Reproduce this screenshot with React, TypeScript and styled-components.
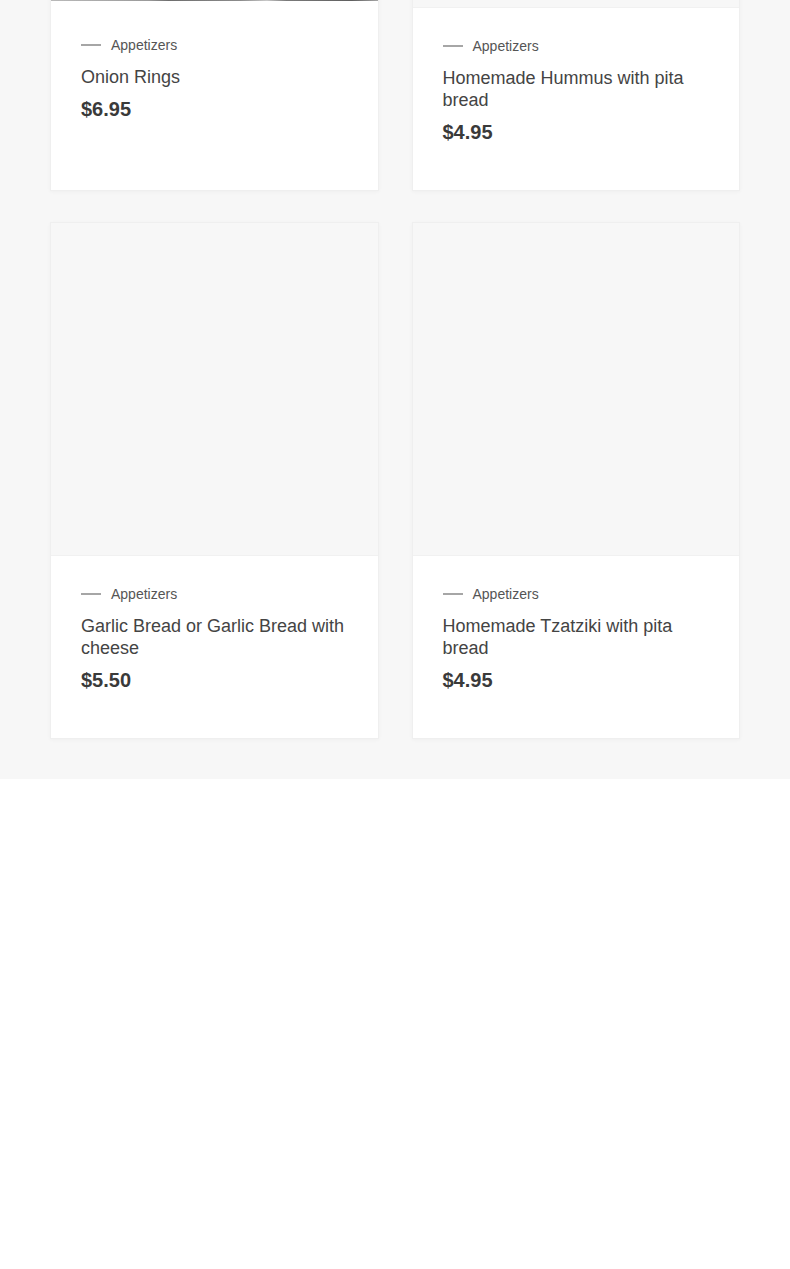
import React from "react";
import styled, { createGlobalStyle } from "styled-components";

const GlobalStyle = createGlobalStyle`
  html, body {
    margin: 0;
    padding: 0;
    background: #ffffff;
  }
  body {
    font-family: "Liberation Sans", Arial, sans-serif;
    -webkit-font-smoothing: antialiased;
  }
`;

const Section = styled.section`
  background: #f7f7f7;
  padding: 0 50px 40px;
  overflow: hidden;
`;

const Grid = styled.div<{ $offset?: number }>`
  display: grid;
  grid-template-columns: 1fr 1fr;
  column-gap: 33px;
  row-gap: 31px;
  margin-top: ${(p) => p.$offset ?? 0}px;
`;

const Card = styled.article`
  display: flex;
  flex-direction: column;
  background: #ffffff;
  border: 1px solid #efefef;
  box-shadow: 0 1px 4px rgba(0, 0, 0, 0.035);
`;

const Media = styled.div<{ $photo?: boolean; $cut?: number }>`
  height: ${(p) => 332 - (p.$cut ?? 0)}px;
  flex: none;
  background: ${(p) =>
    p.$photo
      ? "linear-gradient(90deg, #b9b9b9 0%, #9a9a9a 30%, #6e6e6e 36%, #8c8c8c 58%, #c8c8c8 66%, #7a7a7a 72%, #5f5f5f 92%, #a5a5a5 100%)"
      : "#f7f7f7"};
  border-bottom: ${(p) => (p.$photo ? "none" : "1px solid #f1f1f1")};
`;

const Body = styled.div<{ $extraTop?: number }>`
  flex: 1;
  padding: ${(p) => 28 + (p.$extraTop ?? 0)}px 30px 46px;
  display: flex;
  flex-direction: column;
`;

const Category = styled.div`
  display: flex;
  align-items: center;
  gap: 10px;
  font-size: 14px;
  line-height: 20px;
  color: #555555;
  &::before {
    content: "";
    width: 20px;
    height: 2px;
    background: #a6a6a6;
  }
`;

const Title = styled.h3`
  margin: 11px 0 0;
  font-size: 18px;
  line-height: 22px;
  font-weight: 400;
  color: #444444;
`;

const Price = styled.div`
  margin-top: 9px;
  font-size: 20px;
  line-height: 24px;
  font-weight: 700;
  color: #3a3a3a;
`;

type Item = {
  title: string;
  price: string;
  photo?: boolean;
  cut?: number;
};

const rows: Item[][] = [
  [
    { title: "Onion Rings", price: "$6.95", photo: true, cut: 6 },
    { title: "Homemade Hummus with pita bread", price: "$4.95" },
  ],
  [
    { title: "Garlic Bread or Garlic Bread with cheese", price: "$5.50" },
    { title: "Homemade Tzatziki with pita bread", price: "$4.95" },
  ],
];

const MenuCard: React.FC<{ item: Item }> = ({ item }) => (
  <Card>
    <Media $photo={item.photo} $cut={item.cut} />
    <Body $extraTop={item.cut ?? 0}>
      <Category>Appetizers</Category>
      <Title>{item.title}</Title>
      <Price>{item.price}</Price>
    </Body>
  </Card>
);

export default function App() {
  return (
    <>
      <GlobalStyle />
      <Section>
        <Grid $offset={-326}>
          {rows.flat().map((item, i) => (
            <MenuCard key={i} item={item} />
          ))}
        </Grid>
      </Section>
    </>
  );
}
